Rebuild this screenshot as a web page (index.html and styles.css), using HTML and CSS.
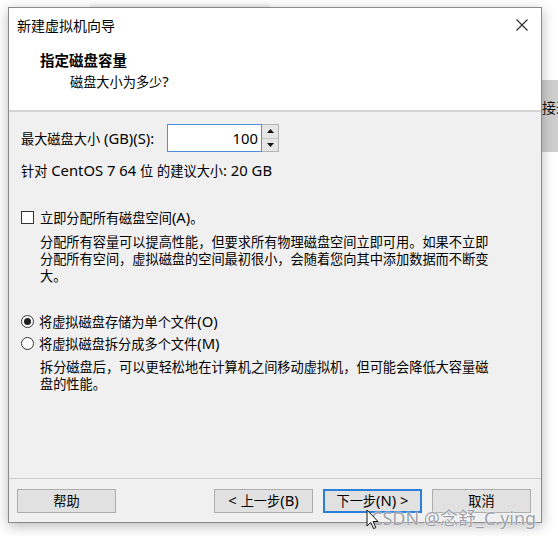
FILE: index.html
```html
<!DOCTYPE html>
<html lang="zh-CN">
<head>
<meta charset="utf-8">
<title>新建虚拟机向导</title>
<link rel="stylesheet" href="styles.css">
</head>
<body>
<div class="desk">
  <div class="topshade"></div>
  <div class="bgwin"><span class="bgtext">接近</span></div>

  <div class="dialog">
    <div class="titlebar">
      <span class="title">新建虚拟机向导</span>
      <svg class="close" width="12" height="12" viewBox="0 0 12 12"><path d="M0.5 0.5 L11.5 11.5 M11.5 0.5 L0.5 11.5" stroke="#2b2b2b" stroke-width="1.1" fill="none"/></svg>
    </div>
    <div class="header">
      <div class="h-title">指定磁盘容量</div>
      <div class="h-sub">磁盘大小为多少<span class="en">?</span></div>
    </div>

    <div class="content">
      <div class="size-row">
        <span class="size-label">最大磁盘大小<span class="en"> (GB)(S):</span></span>
        <div class="spin">
          <div class="spin-input"><span class="en">100</span></div>
          <div class="spin-btns">
            <div class="spin-btn"><svg width="7" height="4" viewBox="0 0 7 4"><path d="M3.5 0 L7 4 L0 4 Z" fill="#111"/></svg></div>
            <div class="spin-btn"><svg width="7" height="4" viewBox="0 0 7 4"><path d="M0 0 L7 0 L3.5 4 Z" fill="#111"/></svg></div>
          </div>
        </div>
      </div>

      <div class="hint">针对<span class="en"> CentOS 7 64 </span>位<span class="en"> </span>的建议大小<span class="en">: 20 GB</span></div>

      <div class="opt-row check-row">
        <span class="box"></span>
        <span>立即分配所有磁盘空间<span class="en">(A)</span>。</span>
      </div>
      <p class="desc desc1">分配所有容量可以提高性能，但要求所有物理磁盘空间立即可用。如果不立即分配所有空间，虚拟磁盘的空间最初很小，会随着您向其中添加数据而不断变大。</p>

      <div class="opt-row radio-row first">
        <span class="radio checked"><span class="dot"></span></span>
        <span>将虚拟磁盘存储为单个文件<span class="en">(O)</span></span>
      </div>
      <div class="opt-row radio-row second">
        <span class="radio"></span>
        <span>将虚拟磁盘拆分成多个文件<span class="en">(M)</span></span>
      </div>
      <p class="desc desc2">拆分磁盘后，可以更轻松地在计算机之间移动虚拟机，但可能会降低大容量磁盘的性能。</p>
    </div>

    <div class="footer">
      <div class="btn help">帮助</div>
      <div class="btn"><span class="en">&lt; </span>上一步<span class="en">(B)</span></div>
      <div class="btn default">下一步<span class="en">(N) &gt;</span></div>
      <div class="btn">取消</div>
    </div>
  </div>

  <div class="watermark">CSDN @念舒_C.ying</div>
  <svg class="cursor" width="13" height="21" viewBox="0 0 13 21"><path d="M1 1 L1 17 L4.8 13.4 L7.6 19.6 L9.8 18.6 L7.1 12.5 L12 12.5 Z" fill="#fff" stroke="#111" stroke-width="1" stroke-linejoin="round"/></svg>
</div>
</body>
</html>
```
FILE: styles.css
```css
html, body {
  margin: 0;
  padding: 0;
}

body {
  width: 558px;
  height: 536px;
  overflow: hidden;
  background: #ffffff;
  font-family: "Noto Sans CJK SC", "Noto Sans", sans-serif;
  font-size: 13.2px;
  color: #000;
}

.en {
  font-family: "Noto Sans", "Noto Sans CJK SC", sans-serif;
  font-size: 14.8px;
}

.desk {
  position: relative;
  width: 558px;
  height: 536px;
  box-sizing: border-box;
  padding: 7px 0 0 8px;
}

/* background windows on the desktop */
.topshade {
  position: absolute;
  left: 90px;
  top: 3px;
  width: 180px;
  height: 4px;
  background: linear-gradient(#ffffff, #ececec);
}

.bgwin {
  position: absolute;
  left: 420px;
  top: 80px;
  width: 160px;
  height: 72px;
  background: #cfcfcf;
}

.bgtext {
  position: absolute;
  left: 122px;
  top: 18px;
  font-size: 14px;
  line-height: 18px;
  white-space: nowrap;
  color: #111;
}

/* dialog window */
.dialog {
  position: relative;
  z-index: 1;
  width: 534px;
  height: 516px;
  box-sizing: border-box;
  border: 1px solid #8a8a8a;
  background: #f0f0f0;
  display: flex;
  flex-direction: column;
  box-shadow: 0 3px 12px rgba(0, 0, 0, 0.28);
}

.titlebar {
  height: 34px;
  flex: none;
  background: #fff;
  display: flex;
  align-items: center;
  justify-content: space-between;
  padding: 0 13px 0 8px;
}

.title {
  font-size: 14px;
  line-height: 18px;
}

.close {
  display: block;
}

.header {
  height: 70px;
  flex: none;
  box-sizing: border-box;
  background: #fff;
  border-bottom: 2px solid #d5d5d5;
  padding: 9px 0 0 31px;
}

.h-title {
  font-weight: bold;
  font-size: 14.5px;
  line-height: 18px;
}

.h-sub {
  margin: 3px 0 0 30px;
  line-height: 18px;
}

.content {
  flex: 1;
  padding-left: 12px;
}

.size-row {
  display: flex;
  align-items: center;
  margin-top: 12px;
  height: 28px;
}

.size-label {
  width: 146px;
  flex: none;
  white-space: nowrap;
  line-height: 17px;
}

.spin {
  display: flex;
  height: 28px;
}

.spin-input {
  width: 95px;
  box-sizing: border-box;
  border: 1px solid #4d8fdc;
  background: #fff;
  display: flex;
  align-items: center;
  justify-content: flex-end;
  padding-right: 3px;
  line-height: 17px;
}

.spin-btns {
  width: 17px;
  box-sizing: border-box;
  border: 1px solid #b4b4b4;
  border-left: none;
  display: flex;
  flex-direction: column;
  background: #e6e6e6;
}

.spin-btn {
  flex: 1;
  display: flex;
  align-items: center;
  justify-content: center;
}

.spin-btn + .spin-btn {
  border-top: 1px solid #c4c4c4;
}

.hint {
  margin-top: 10px;
  line-height: 17px;
}

.opt-row {
  display: flex;
  align-items: center;
  height: 18px;
  line-height: 17px;
}

.check-row {
  margin-top: 29px;
  gap: 6px;
}

.box {
  width: 13px;
  height: 13px;
  box-sizing: border-box;
  border: 1px solid #333;
  background: #fff;
  flex: none;
}

.desc {
  margin: 7px 0 0 19px;
  width: 455px;
  line-height: 17px;
}

.radio-row {
  gap: 5px;
}

.radio-row.first {
  margin-top: 28px;
}

.radio-row.second {
  margin-top: 4px;
}

.radio {
  width: 13px;
  height: 13px;
  box-sizing: border-box;
  border: 1px solid #333;
  border-radius: 50%;
  background: #fff;
  flex: none;
  display: flex;
  align-items: center;
  justify-content: center;
}

.dot {
  width: 7px;
  height: 7px;
  border-radius: 50%;
  background: #1e1e1e;
}

.desc2 {
  margin-top: 6px;
}

.footer {
  height: 44px;
  flex: none;
  box-sizing: border-box;
  border-top: 1px solid #cdcdcd;
  padding: 10px 10px 0 8px;
  display: flex;
  gap: 10px;
}

.btn {
  width: 99px;
  height: 24px;
  box-sizing: border-box;
  border: 1px solid #adadad;
  background: #e1e1e1;
  text-align: center;
  line-height: 21px;
  white-space: pre;
}

.btn .en {
  line-height: 21px;
}

.btn.help {
  margin-right: auto;
}

.btn.default {
  border-color: #2a7fd8;
  box-shadow: inset 0 0 0 1px #2a7fd8;
}

.watermark {
  position: absolute;
  z-index: 2;
  left: 371px;
  top: 507px;
  font-family: "Noto Sans", "Noto Sans CJK SC", sans-serif;
  font-size: 18px;
  line-height: 22px;
  white-space: nowrap;
  color: rgba(100, 105, 120, 0.65);
  text-shadow: 0 0 2px #fff, 0 0 1px #fff;
}

.cursor {
  position: absolute;
  z-index: 3;
  left: 366px;
  top: 509px;
}
```
